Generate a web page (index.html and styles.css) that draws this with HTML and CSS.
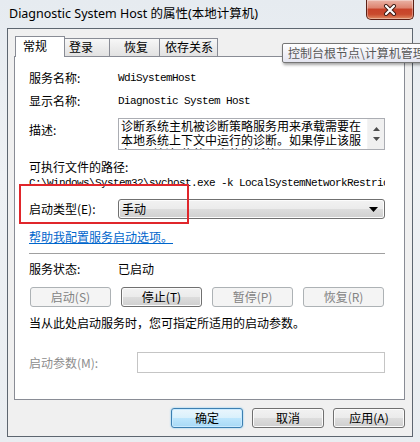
FILE: index.html
```html
<!DOCTYPE html>
<html>
<head>
<meta charset="utf-8">
<link rel="stylesheet" href="styles.css">
</head>
<body>
<div class="window">
  <div class="titlebar">
    <span class="title">Diagnostic System Host 的属性(本地计算机)</span>
    <div class="close">
      <svg width="14" height="12" viewBox="0 0 14 12"><path d="M3 2 L11 10 M11 2 L3 10" stroke="#3a1a12" stroke-width="4" stroke-linecap="round"/><path d="M3 2 L11 10 M11 2 L3 10" stroke="#fff" stroke-width="2.2" stroke-linecap="round"/></svg>
    </div>
  </div>
  <div class="client">
    <div class="tabs">
      <div class="tab active">常规</div>
      <div class="tab">登录</div>
      <div class="tab">恢复</div>
      <div class="tab">依存关系</div>
    </div>
    <div class="page">
      <div class="row r1"><span class="lbl">服务名称:</span><span class="mono">WdiSystemHost</span></div>
      <div class="row r2"><span class="lbl">显示名称:</span><span class="mono">Diagnostic System Host</span></div>
      <div class="row desc-row">
        <span class="lbl desc-lbl">描述:</span>
        <div class="desc">
          <div class="desc-text">诊断系统主机被诊断策略服务用来承载需要在本地系统上下文中运行的诊断。如果停止该服务，则任何依赖于它的诊断将不再可用。</div>
          <div class="vscroll">
            <svg width="7" height="4" viewBox="0 0 7 4"><path d="M0 4 L3.5 0 L7 4Z" fill="#4d4d4d"/></svg>
            <svg width="7" height="4" viewBox="0 0 7 4"><path d="M0 0 L3.5 4 L7 0Z" fill="#4d4d4d"/></svg>
          </div>
        </div>
      </div>
      <div class="row path-lbl">可执行文件的路径:</div>
      <div class="row path mono">C:\Windows\System32\svchost.exe -k LocalSystemNetworkRestricted</div>
      <div class="row combo-row">
        <span class="lbl">启动类型(E):</span>
        <div class="combo"><span>手动</span><svg width="9" height="5" viewBox="0 0 9 5"><path d="M0 0 H9 L4.5 5Z" fill="#000"/></svg></div>
      </div>
      <a class="row link">帮助我配置服务启动选项。</a>
      <div class="sep"></div>
      <div class="row status"><span class="lbl">服务状态:</span><span>已启动</span></div>
      <div class="svc-btns">
        <div class="btn disabled">启动(S)</div>
        <div class="btn">停止(T)</div>
        <div class="btn disabled">暂停(P)</div>
        <div class="btn disabled">恢复(R)</div>
      </div>
      <div class="row hint">当从此处启动服务时，您可指定所适用的启动参数。</div>
      <div class="row params"><span class="lbl gray">启动参数(M):</span><div class="input"></div></div>
      <div class="redbox"></div>
    </div>
    <div class="dlg-btns">
      <div class="btn default">确定</div>
      <div class="btn">取消</div>
      <div class="btn">应用(A)</div>
    </div>
  </div>
  <div class="tooltip">控制台根节点\计算机管理</div>
</div>
</body>
</html>
```
FILE: styles.css
```css
* { box-sizing: border-box; }
html, body { margin: 0; padding: 0; }
body {
  width: 420px;
  height: 442px;
  overflow: hidden;
  font-family: "Noto Sans CJK SC", sans-serif;
  font-size: 12px;
  color: #000;
}
.window {
  position: relative;
  width: 420px;
  height: 442px;
  padding: 0 7px 5px 7px;
  background: linear-gradient(180deg, #e6ebf0 0%, #eef1f4 40%, #e9edf1 100%);
  display: flex;
  flex-direction: column;
}
.titlebar {
  height: 28px;
  display: flex;
  align-items: flex-start;
  justify-content: space-between;
}
.title {
  margin-top: 5px;
  margin-left: 2px;
  font-family: "Noto Sans", "Noto Sans CJK SC", sans-serif;
  font-size: 12.5px;
  line-height: 18px;
  color: #000;
}
.close {
  width: 48px;
  height: 20px;
  margin-right: -1px;
  border: 1px solid #5b2016;
  border-top: none;
  border-radius: 0 0 5px 5px;
  background: linear-gradient(180deg, #eab3a6 0%, #de8571 40%, #c8432a 50%, #c94a2e 75%, #e08a62 100%);
  box-shadow: inset 0 0 0 1px rgba(255,255,255,0.35);
  display: flex;
  align-items: center;
  justify-content: center;
}
.client {
  flex: 1;
  border: 1px solid #5d6670;
  background: #f0f0f0;
  padding: 7px 7px 8px 6px;
  display: flex;
  flex-direction: column;
}
.tabs {
  height: 20px;
  display: flex;
  align-items: flex-end;
  position: relative;
  z-index: 2;
}
.tab {
  height: 18px;
  padding: 0 6px;
  border: 1px solid #898c95;
  border-bottom: none;
  border-right: none;
  background: linear-gradient(180deg, #f7f7f7 0%, #ececec 50%, #e2e2e2 100%);
  line-height: 16px;
  white-space: nowrap;
  flex: none;
}
.tab:nth-child(2) { width: 45px; padding-left: 4px; }
.tab:nth-child(3) { width: 50px; padding-left: 14px; }
.tab:nth-child(4) { width: 59px; padding-left: 5px; padding-right: 0; border-right: 1px solid #898c95; }
.tab.active {
  height: 21px;
  width: 50px;
  margin-left: 1px;
  margin-bottom: -1px;
  padding-left: 7px;
  background: #fff;
  border-right: 1px solid #898c95;
  margin-right: -1px;
  position: relative;
  z-index: 3;
  line-height: 18px;
}
.page {
  position: relative;
  height: 344px;
  border: 1px solid #898c95;
  background: #fff;
  padding: 13px 18px 0 14px;
  display: flex;
  flex-direction: column;
}
.row {
  height: 16px;
  line-height: 16px;
  display: flex;
  align-items: center;
  white-space: nowrap;
}
.lbl { width: 89px; flex: none; }
.mono {
  font-family: "Liberation Mono", monospace;
  font-size: 11px;
  letter-spacing: -0.6px;
}
.r2 { margin-top: 7px; }
.desc-row { margin-top: 9px; height: 32px; align-items: flex-start; }
.desc-lbl { margin-top: 4px; }
.desc {
  width: 267px;
  height: 32px;
  border: 1px solid #abadb3;
  display: flex;
  overflow: hidden;
}
.desc-text {
  flex: 1;
  padding: 0 2px;
  font-size: 12px;
  line-height: 14px;
  white-space: normal;
  overflow: hidden;
  word-break: break-all;
}
.vscroll {
  width: 17px;
  background: #f0f0f0;
  border-left: 1px solid #f4f4f4;
  display: flex;
  flex-direction: column;
  align-items: center;
  justify-content: space-between;
  padding: 8px 0 8px;
}
.path-lbl { margin-top: 9px; }
.path { width: 356px; overflow: hidden; display: block; }
.combo-row { margin-top: 8px; height: 20px; }
.combo {
  width: 267px;
  height: 20px;
  border: 1px solid #707070;
  border-radius: 3px;
  background: linear-gradient(180deg, #f2f2f2 0%, #ebebeb 50%, #dddddd 50%, #cfcfcf 100%);
  box-shadow: inset 0 0 0 1px #fcfcfc;
  display: flex;
  align-items: center;
  justify-content: space-between;
  padding: 0 6px 0 3px;
}
.link {
  margin-top: 10px;
  color: #0066cc;
  text-decoration: underline;
  display: block;
}
.sep {
  margin-top: 8px;
  height: 1px;
  width: 356px;
  background: #a0a0a0;
}
.status { margin-top: 7px; }
.svc-btns {
  margin-top: 10px;
  display: flex;
  gap: 10px;
  padding-left: 1px;
}
.btn {
  width: 81px;
  height: 20px;
  border: 1px solid #707070;
  border-radius: 3px;
  background: linear-gradient(180deg, #f2f2f2 0%, #ebebeb 50%, #dddddd 50%, #cfcfcf 100%);
  box-shadow: inset 0 0 0 1px #fbfbfb;
  display: flex;
  align-items: center;
  justify-content: center;
  line-height: 16px;
}
.btn.disabled {
  border-color: #adb2b5;
  background: #f4f4f4;
  box-shadow: none;
  color: #838383;
}
.hint { margin-top: 8px; }
.params { margin-top: 21px; height: 21px; }
.gray { color: #8d8d8d; width: 108px; }
.input {
  width: 248px;
  height: 21px;
  border: 1px solid #c5c5c5;
  background: #fff;
}
.redbox {
  position: absolute;
  left: 4px;
  top: 127px;
  width: 170px;
  height: 40px;
  border: 2px solid #e0262b;
}
.dlg-btns {
  margin-top: 8px;
  display: flex;
  justify-content: flex-end;
  gap: 9px;
}
.dlg-btns .btn { width: 72px; }
.btn.default {
  border-color: #3c7fb1;
  background: linear-gradient(180deg, #eaf6fd 0%, #d9f0fc 50%, #bee6fd 50%, #a7d9f5 100%);
  box-shadow: inset 0 0 0 1px #c8eaff, 0 0 2px #6fc2ef;
}
.tooltip {
  position: absolute;
  left: 282px;
  top: 43px;
  width: 150px;
  height: 20px;
  border: 1px solid #767676;
  border-radius: 2px;
  background: linear-gradient(180deg, #ffffff 0%, #e4e5f0 100%);
  box-shadow: 1px 2px 3px rgba(0,0,0,0.35);
  color: #575757;
  padding-left: 5px;
  line-height: 18px;
  white-space: nowrap;
  z-index: 10;
}
```
